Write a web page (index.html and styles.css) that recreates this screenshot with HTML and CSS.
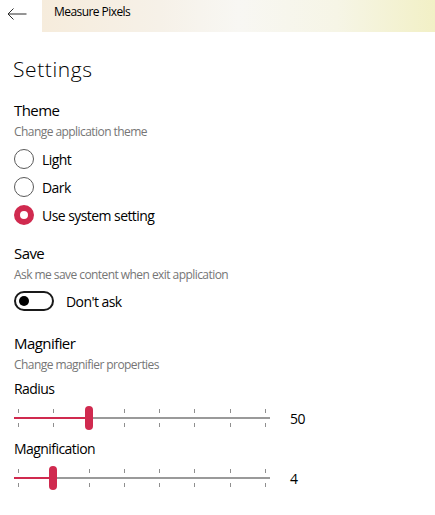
FILE: index.html
```html
<!DOCTYPE html>
<html lang="en">
<head>
<meta charset="utf-8">
<title>Measure Pixels - Settings</title>
<link rel="stylesheet" href="styles.css">
</head>
<body>
<header class="titlebar">
  <button class="back" aria-label="Back">
    <svg width="20" height="12" viewBox="0 0 20 12" aria-hidden="true">
      <path d="M1 6 H19.5 M6.5 0.5 L1 6 L6.5 11.5" fill="none" stroke="#2b2b2b" stroke-width="1"/>
    </svg>
  </button>
  <div class="title">Measure Pixels</div>
</header>
<main class="content">
  <h1 class="page-title">Settings</h1>

  <section class="group">
    <h2 class="group-title">Theme</h2>
    <p class="desc">Change application theme</p>
    <div class="radios">
      <label class="radio"><span class="circle"></span><span>Light</span></label>
      <label class="radio"><span class="circle"></span><span>Dark</span></label>
      <label class="radio checked"><span class="circle"></span><span>Use system setting</span></label>
    </div>
  </section>

  <section class="group">
    <h2 class="group-title">Save</h2>
    <p class="desc">Ask me save content when exit application</p>
    <div class="toggle-row">
      <span class="toggle"><span class="knob"></span></span>
      <span>Don't ask</span>
    </div>
  </section>

  <section class="group magnifier">
    <h2 class="group-title">Magnifier</h2>
    <p class="desc">Change magnifier properties</p>
    <div class="field-label">Radius</div>
    <div class="slider-row">
      <div class="slider" style="--f: 0.2857">
        <div class="ticks"><i></i><i></i><i></i><i></i><i></i><i></i><i></i><i></i></div>
        <div class="track"><div class="fill"></div></div>
        <div class="thumb"></div>
      </div>
      <span class="value">50</span>
    </div>
    <div class="field-label second">Magnification</div>
    <div class="slider-row">
      <div class="slider" style="--f: 0.1429">
        <div class="ticks"><i></i><i></i><i></i><i></i><i></i><i></i><i></i><i></i></div>
        <div class="track"><div class="fill"></div></div>
        <div class="thumb"></div>
      </div>
      <span class="value">4</span>
    </div>
  </section>
</main>
</body>
</html>
```

FILE: styles.css
```css
* { box-sizing: border-box; }
html, body { margin: 0; padding: 0; background: #fff; }
body {
  font-family: "Segoe UI", "Open Sans", "Noto Sans", sans-serif;
  color: #000;
  letter-spacing: -0.035em;
  width: 435px;
  height: 515px;
  overflow: hidden;
}

.titlebar {
  display: flex;
  height: 32px;
}
.back {
  width: 42px;
  height: 32px;
  border: 0;
  background: transparent;
  padding: 8px 0 0 7px;
  display: flex;
  align-items: flex-start;
  justify-content: flex-start;
}
.title {
  flex: 1;
  font-size: 12px;
  line-height: 16px;
  padding: 4px 0 0 12px;
  color: #000;
  background: linear-gradient(90deg, #f6ecdc 0%, #f6f1e8 30%, #f8f7f3 50%, #f6f5e6 75%, #f2f0c6 100%);
}

.content {
  padding: 0 14px;
}
.page-title {
  font-size: 21px;
  font-weight: 300;
  letter-spacing: 0.6px;
  line-height: 28px;
  margin: 23px 0 0 -1px;
}
.group-title {
  font-size: 15px;
  font-weight: 400;
  line-height: 20px;
  margin: 0;
}
.group { margin-top: 17px; }
.group + .group { margin-top: 14px; }
.group.magnifier { margin-top: 18px; }
.desc {
  font-size: 12px;
  line-height: 16px;
  color: #767676;
  margin: 4px 0 0;
}

.radios {
  margin-top: 5px;
  display: flex;
  flex-direction: column;
}
.radio {
  display: flex;
  align-items: center;
  gap: 8px;
  height: 28px;
  font-size: 14px;
}
.circle {
  width: 20px;
  height: 20px;
  border-radius: 50%;
  border: 1.5px solid #5a5a5a;
  flex: none;
}
.radio.checked .circle {
  border: 6px solid #d02a4f;
  background: #fff;
}

.toggle-row {
  margin-top: 4px;
  height: 28px;
  display: flex;
  align-items: center;
  gap: 12px;
  font-size: 14px;
}
.toggle {
  width: 40px;
  height: 20px;
  border: 2px solid #1a1a1a;
  border-radius: 10px;
  display: flex;
  align-items: center;
  padding-left: 3px;
}
.knob {
  width: 10px;
  height: 10px;
  border-radius: 50%;
  background: #000;
}

.field-label {
  font-size: 14px;
  line-height: 20px;
  margin-top: 6px;
}
.field-label.second { margin-top: 9px; }

.slider-row {
  margin-top: 7px;
  display: flex;
  align-items: center;
  font-size: 14px;
}
.slider {
  position: relative;
  width: 256px;
  height: 24px;
  display: flex;
  align-items: center;
}
.ticks {
  position: absolute;
  inset: 0;
  display: flex;
  justify-content: space-between;
  align-items: center;
  padding: 0 4px;
}
.ticks i {
  width: 1px;
  height: 18px;
  background: linear-gradient(#8f8f8f 0 4px, transparent 4px 14px, #8f8f8f 14px 18px);
}
.track {
  position: relative;
  width: 100%;
  height: 2px;
  background: #9a9a9a;
}
.fill {
  height: 100%;
  width: calc(4px + var(--f) * 248px);
  background: #d02a4f;
}
.thumb {
  position: absolute;
  top: 0;
  left: calc(var(--f) * 248px);
  width: 8px;
  height: 24px;
  border-radius: 4px;
  background: #d02a4f;
}
.value {
  margin-left: 20px;
}
```
